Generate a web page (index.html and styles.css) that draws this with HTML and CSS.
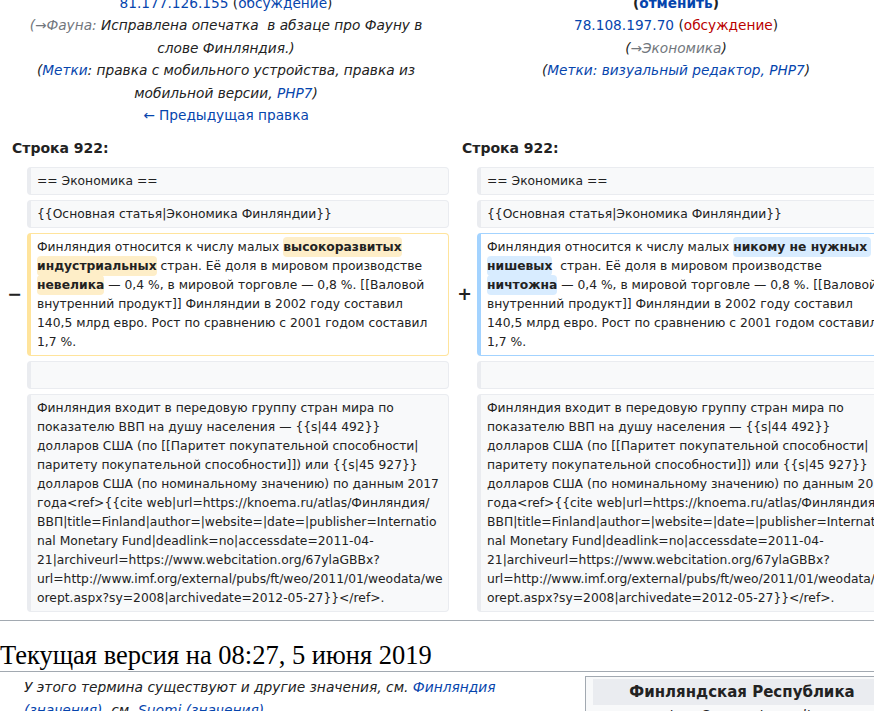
FILE: index.html
```html
<!DOCTYPE html>
<html lang="ru">
<head>
<meta charset="utf-8">
<title>Финляндия — разница между версиями</title>
<link rel="stylesheet" href="styles.css">
</head>
<body>
<div class="page">
  <div class="diff">
    <div class="title">
      <div class="tline"><a class="lnk">81.177.126.155</a> (<a class="lnk">обсуждение</a>)</div>
      <div class="tline it"><span class="gray">(→Фауна:</span> Исправлена опечатка&nbsp; в абзаце про Фауну в</div>
      <div class="tline it">слове Финляндия.)</div>
      <div class="tline it">(<a class="lnk">Метки</a>: правка с мобильного устройства, правка из</div>
      <div class="tline it">мобильной версии, <a class="lnk">PHP7</a>)</div>
      <div class="tline"><a class="lnk">← Предыдущая правка</a></div>
    </div>
    <div class="title">
      <div class="tline"><strong>(<a class="lnk">отменить</a>)</strong></div>
      <div class="tline"><a class="lnk">78.108.197.70</a> (<a class="red">обсуждение</a>)</div>
      <div class="tline it">(<span class="gray">→Экономика</span>)</div>
      <div class="tline it">(<a class="lnk">Метки: визуальный редактор, PHP7</a>)</div>
    </div>

    <div class="lineno">Строка 922:</div>
    <div class="lineno">Строка 922:</div>

    <div class="marker"></div>
    <div class="line ctx">== Экономика ==</div>
    <div class="marker"></div>
    <div class="line ctx">== Экономика ==</div>

    <div class="marker"></div>
    <div class="line ctx">{{Основная статья|Экономика Финляндии}}</div>
    <div class="marker"></div>
    <div class="line ctx">{{Основная статья|Экономика Финляндии}}</div>

    <div class="marker">−</div>
    <div class="line del">Финляндия относится к числу малых <span class="chg">высокоразвитых</span><br><span class="chg">индустриальных</span> стран. Её доля в мировом производстве<br><span class="chg">невелика</span> — 0,4 %, в мировой торговле — 0,8 %. [[Валовой<br>внутренний продукт]] Финляндии в 2002 году составил<br>140,5 млрд евро. Рост по сравнению с 2001 годом составил<br>1,7 %.</div>
    <div class="marker">+</div>
    <div class="line add">Финляндия относится к числу малых <span class="chg">никому не нужных </span><br><span class="chg">нишевых</span>  стран. Её доля в мировом производстве<br><span class="chg">ничтожна</span> — 0,4 %, в мировой торговле — 0,8 %. [[Валовой<br>внутренний продукт]] Финляндии в 2002 году составил<br>140,5 млрд евро. Рост по сравнению с 2001 годом составил<br>1,7 %.</div>

    <div class="marker"></div>
    <div class="line ctx">&nbsp;</div>
    <div class="marker"></div>
    <div class="line ctx">&nbsp;</div>

    <div class="marker"></div>
    <div class="line ctx">Финляндия входит в передовую группу стран мира по<br>показателю ВВП на душу населения — {{s|44 492}}<br>долларов США (по [[Паритет покупательной способности|<br>паритету покупательной способности]]) или {{s|45 927}}<br>долларов США (по номинальному значению) по данным 2017<br>года&lt;ref&gt;{{cite web|url=https://knoema.ru/atlas/Финляндия/<br>ВВП|title=Finland|author=|website=|date=|publisher=Internatio<br>nal Monetary Fund|deadlink=no|accessdate=2011-04-<br>21|archiveurl=https://www.webcitation.org/67ylaGBBx?<br>url=http://www.imf.org/external/pubs/ft/weo/2011/01/weodata/we<br>orept.aspx?sy=2008|archivedate=2012-05-27}}&lt;/ref&gt;.</div>
    <div class="marker"></div>
    <div class="line ctx">Финляндия входит в передовую группу стран мира по<br>показателю ВВП на душу населения — {{s|44 492}}<br>долларов США (по [[Паритет покупательной способности|<br>паритету покупательной способности]]) или {{s|45 927}}<br>долларов США (по номинальному значению) по данным 2017<br>года&lt;ref&gt;{{cite web|url=https://knoema.ru/atlas/Финляндия/<br>ВВП|title=Finland|author=|website=|date=|publisher=Internatio<br>nal Monetary Fund|deadlink=no|accessdate=2011-04-<br>21|archiveurl=https://www.webcitation.org/67ylaGBBx?<br>url=http://www.imf.org/external/pubs/ft/weo/2011/01/weodata/we<br>orept.aspx?sy=2008|archivedate=2012-05-27}}&lt;/ref&gt;.</div>
  </div>

  <hr class="sep">
  <h2 class="cur">Текущая версия на 08:27, 5 июня 2019</h2>

  <div class="article">
    <div class="infobox">
      <div class="ib-title">Финляндская Республика</div>
      <div class="ib-sub"><i>фин. Suomen tasavalta</i></div>
    </div>
    <div class="hatnote">У этого термина существуют и другие значения, см. <a class="lnk">Финляндия<br>(значения)</a>, см. <a class="lnk">Suomi (значения)</a>.</div>
  </div>
</div>
</body>
</html>
```

FILE: styles.css
```css
html {
  overflow: hidden;
}

body {
  margin: 0;
  background: #ffffff;
  color: #222222;
  font-family: "DejaVu Sans", sans-serif;
}

.page {
  width: 899px;
}

a {
  text-decoration: none;
}

.lnk {
  color: #0645ad;
}

.red {
  color: #ba0000;
}

.gray {
  color: #72777d;
}

.it {
  font-style: italic;
}

/* diff table */
.diff {
  display: grid;
  grid-template-columns: 20px 422px 20px 422px;
  column-gap: 4px;
  row-gap: 5px;
  margin-left: 3px;
  margin-top: -8px;
}

.title {
  grid-column: span 2;
  text-align: center;
  font-size: 13.7px;
  line-height: 22.4px;
  white-space: nowrap;
}

.lineno {
  grid-column: span 2;
  font-weight: bold;
  font-size: 14px;
  line-height: 22.4px;
  padding: 5.6px 0 2.8px 9px;
}

.marker {
  align-self: center;
  text-align: right;
  font-weight: bold;
  font-size: 17.5px;
  line-height: 21px;
  padding-right: 1px;
}

.line {
  font-size: 12.32px;
  line-height: 19px;
  padding: 3.5px 6px;
  border-style: solid;
  border-width: 1px 1px 1px 4px;
  border-radius: 4px;
  white-space: pre;
  overflow: hidden;
}

.ctx {
  background: #f8f9fa;
  border-color: #eaecf0;
}

.del {
  background: #ffffff;
  border-color: #ffe49c;
}

.add {
  background: #ffffff;
  border-color: #a3d3ff;
}

.chg {
  font-weight: bold;
  border-radius: 4px;
  padding: 3px 0;
}

.del .chg {
  background: #feeec8;
}

.add .chg {
  background: #d8ecff;
}

/* bottom */
.sep {
  margin: 8px 0 0;
  height: 0;
  border: 0;
  border-top: 1px solid #a2a9b1;
}

.cur {
  margin: 18px 0 4px;
  font-family: "Liberation Serif", serif;
  font-weight: normal;
  font-size: 26.5px;
  line-height: 32px;
  border-bottom: 1px solid #a2a9b1;
  color: #000000;
}

.article {
  font-size: 13.8px;
  line-height: 22.4px;
}

.infobox {
  float: right;
  width: 298px;
  padding: 2px 7px;
  border: 1px solid #a2a9b1;
  background: #f8f9fa;
}

.ib-title {
  background: #eaecf0;
  text-align: center;
  font-weight: bold;
  font-size: 15px;
  line-height: 26px;
}

.ib-sub {
  text-align: center;
  font-size: 13px;
  line-height: 20px;
}

.hatnote {
  padding-left: 24px;
  font-style: italic;
}
```
